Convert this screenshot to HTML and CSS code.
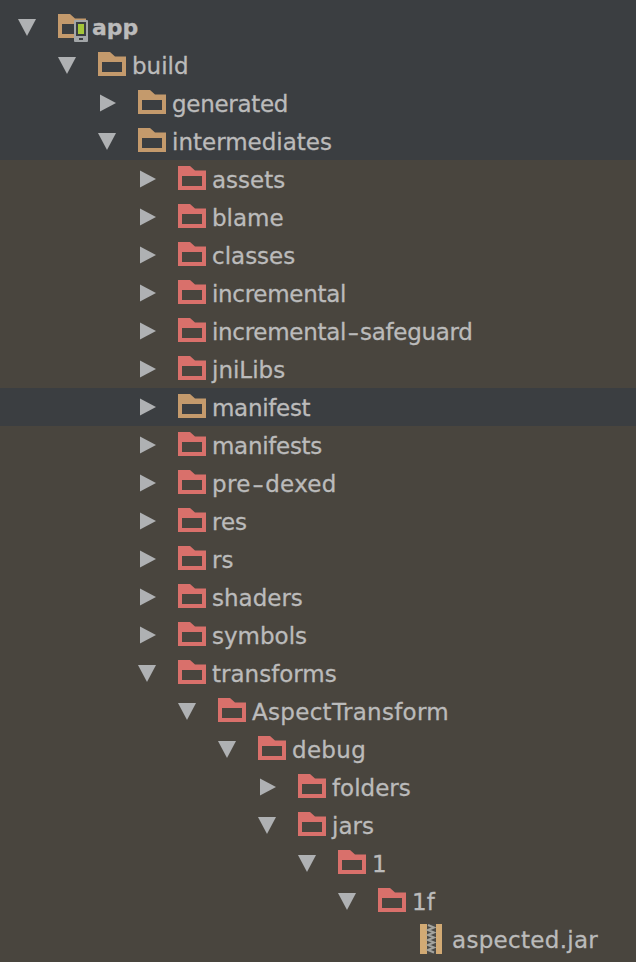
FILE: index.html
```html
<!DOCTYPE html>
<html lang="en">
<head>
  <meta charset="UTF-8">
  <title>Project tree</title>
  <link rel="stylesheet" href="styles.css">
</head>
<body>

  <!-- Shared icons -->
  <svg class="icon-defs" width="0" height="0">
    <symbol id="folder" viewBox="0 0 28 24">
      <path fill-rule="evenodd" d="M0 0H12L17 4.5H28V24H0ZM4 10V20H24V10Z"/>
    </symbol>
    <symbol id="arrow-down" viewBox="0 0 18 17">
      <path d="M0 0H18L9 17Z"/>
    </symbol>
    <symbol id="arrow-right" viewBox="0 0 17 18">
      <path d="M0 0L17 9L0 18Z"/>
    </symbol>
  </svg>

  <ul class="tree">
    <li class="row d0 vcs">
      <svg class="arrow"><use href="#arrow-down"/></svg>
      <span class="icon-app">
        <svg class="folder"><use href="#folder"/></svg>
        <svg class="device" viewBox="0 0 14 22">
          <rect width="14" height="22" rx="1" fill="#a3a6a8"/>
          <rect x="2" y="2" width="10" height="14" fill="#3b3e41"/>
          <rect x="4" y="4" width="6" height="10" fill="#a4c639"/>
          <rect x="5" y="18" width="4" height="2" fill="#3b3e41"/>
        </svg>
      </span>
      <span class="label bold">app</span>
    </li>
    <li class="row d1 vcs">
      <svg class="arrow"><use href="#arrow-down"/></svg>
      <svg class="folder"><use href="#folder"/></svg>
      <span class="label">build</span>
    </li>
    <li class="row d2 vcs">
      <svg class="arrow right"><use href="#arrow-right"/></svg>
      <svg class="folder"><use href="#folder"/></svg>
      <span class="label tight">generated</span>
    </li>
    <li class="row d2 vcs">
      <svg class="arrow"><use href="#arrow-down"/></svg>
      <svg class="folder"><use href="#folder"/></svg>
      <span class="label">intermediates</span>
    </li>
    <li class="row d3 ignored">
      <svg class="arrow right"><use href="#arrow-right"/></svg>
      <svg class="folder"><use href="#folder"/></svg>
      <span class="label">assets</span>
    </li>
    <li class="row d3 ignored">
      <svg class="arrow right"><use href="#arrow-right"/></svg>
      <svg class="folder"><use href="#folder"/></svg>
      <span class="label">blame</span>
    </li>
    <li class="row d3 ignored">
      <svg class="arrow right"><use href="#arrow-right"/></svg>
      <svg class="folder"><use href="#folder"/></svg>
      <span class="label">classes</span>
    </li>
    <li class="row d3 ignored">
      <svg class="arrow right"><use href="#arrow-right"/></svg>
      <svg class="folder"><use href="#folder"/></svg>
      <span class="label tight">incremental</span>
    </li>
    <li class="row d3 ignored">
      <svg class="arrow right"><use href="#arrow-right"/></svg>
      <svg class="folder"><use href="#folder"/></svg>
      <span class="label tight">incremental<span class="dash">-</span>safeguard</span>
    </li>
    <li class="row d3 ignored">
      <svg class="arrow right"><use href="#arrow-right"/></svg>
      <svg class="folder"><use href="#folder"/></svg>
      <span class="label">jniLibs</span>
    </li>
    <li class="row d3 vcs">
      <svg class="arrow right"><use href="#arrow-right"/></svg>
      <svg class="folder"><use href="#folder"/></svg>
      <span class="label tight">manifest</span>
    </li>
    <li class="row d3 ignored">
      <svg class="arrow right"><use href="#arrow-right"/></svg>
      <svg class="folder"><use href="#folder"/></svg>
      <span class="label tight">manifests</span>
    </li>
    <li class="row d3 ignored">
      <svg class="arrow right"><use href="#arrow-right"/></svg>
      <svg class="folder"><use href="#folder"/></svg>
      <span class="label wide">pre<span class="dash">-</span>dexed</span>
    </li>
    <li class="row d3 ignored">
      <svg class="arrow right"><use href="#arrow-right"/></svg>
      <svg class="folder"><use href="#folder"/></svg>
      <span class="label">res</span>
    </li>
    <li class="row d3 ignored">
      <svg class="arrow right"><use href="#arrow-right"/></svg>
      <svg class="folder"><use href="#folder"/></svg>
      <span class="label">rs</span>
    </li>
    <li class="row d3 ignored">
      <svg class="arrow right"><use href="#arrow-right"/></svg>
      <svg class="folder"><use href="#folder"/></svg>
      <span class="label">shaders</span>
    </li>
    <li class="row d3 ignored">
      <svg class="arrow right"><use href="#arrow-right"/></svg>
      <svg class="folder"><use href="#folder"/></svg>
      <span class="label">symbols</span>
    </li>
    <li class="row d3 ignored">
      <svg class="arrow"><use href="#arrow-down"/></svg>
      <svg class="folder"><use href="#folder"/></svg>
      <span class="label">transforms</span>
    </li>
    <li class="row d4 ignored">
      <svg class="arrow"><use href="#arrow-down"/></svg>
      <svg class="folder"><use href="#folder"/></svg>
      <span class="label wide">AspectTransform</span>
    </li>
    <li class="row d5 ignored">
      <svg class="arrow"><use href="#arrow-down"/></svg>
      <svg class="folder"><use href="#folder"/></svg>
      <span class="label wide">debug</span>
    </li>
    <li class="row d6 ignored">
      <svg class="arrow right"><use href="#arrow-right"/></svg>
      <svg class="folder"><use href="#folder"/></svg>
      <span class="label">folders</span>
    </li>
    <li class="row d6 ignored">
      <svg class="arrow"><use href="#arrow-down"/></svg>
      <svg class="folder"><use href="#folder"/></svg>
      <span class="label">jars</span>
    </li>
    <li class="row d7 ignored">
      <svg class="arrow"><use href="#arrow-down"/></svg>
      <svg class="folder"><use href="#folder"/></svg>
      <span class="label">1</span>
    </li>
    <li class="row d8 ignored">
      <svg class="arrow"><use href="#arrow-down"/></svg>
      <svg class="folder"><use href="#folder"/></svg>
      <span class="label">1f</span>
    </li>
    <li class="row d9 ignored">
      <span class="arrow"></span>
      <svg class="jar" viewBox="0 0 28 30">
        <rect x="2" width="7" height="30" fill="#d2aa74"/>
        <rect x="9" width="9" height="30" fill="#4b4a47"/>
        <path d="M10 1l6 2.5l-6 2.5l6 2.5l-6 2.5l6 2.5l-6 2.5l6 2.5l-6 2.5l6 2.5l-6 2.5l6 2.5" fill="none" stroke="#a3a39e" stroke-width="2"/>
        <rect x="18" width="6" height="30" fill="#d2aa74"/>
      </svg>
      <span class="label wide">aspected.jar</span>
    </li>
  </ul>

</body>
</html>
```

FILE: styles.css
```css
html {
  background: #49453e;
}

body {
  margin: 0;
  padding: 0;
  height: 962px;
  overflow: hidden;
  font-family: "DejaVu Sans", sans-serif;
  color: #bbbbbb;
}

.icon-defs {
  display: block;
  height: 0;
}

/* Tree */
.tree {
  list-style: none;
  margin: 0;
  padding: 0;
}

.row {
  display: flex;
  align-items: center;
  height: 38px;
}

.row:first-child {
  height: 46px;
  padding-top: 8px;
  box-sizing: border-box;
}

.vcs {
  background: #3b3e41;
}

.ignored {
  background: #49453e;
}

/* One indent level is 40px */
.d0 { padding-left: 18px; }
.d1 { padding-left: 58px; }
.d2 { padding-left: 98px; }
.d3 { padding-left: 138px; }
.d4 { padding-left: 178px; }
.d5 { padding-left: 218px; }
.d6 { padding-left: 258px; }
.d7 { padding-left: 298px; }
.d8 { padding-left: 338px; }
.d9 { padding-left: 378px; }

.arrow {
  flex: none;
  width: 18px;
  height: 17px;
  margin-right: 22px;
  fill: #afb1b3;
}

.arrow.right {
  width: 16px;
  height: 18px;
  margin-left: 2px;
}

.folder {
  flex: none;
  width: 28px;
  height: 24px;
  margin-bottom: 2px;
  fill: #c49a6c;
}

.ignored .folder {
  fill: #d9706b;
}

.jar {
  flex: none;
  width: 28px;
  height: 30px;
}

.label {
  margin-left: 6px;
  padding-top: 2px;
  font-size: 23px;
  line-height: 36px;
  white-space: nowrap;
  -webkit-text-stroke: 0.3px #bbbbbb;
}

.bold {
  font-size: 22px;
  font-weight: bold;
}

.tight {
  letter-spacing: -0.3px;
}

.wide {
  letter-spacing: 0.3px;
}

/* The hyphen is long in the IDE font */
.dash {
  display: inline-block;
  margin: 0 3px;
  transform: scaleX(1.4);
}

/* Module icon: folder with a device over its corner */
.icon-app {
  position: relative;
  display: flex;
  flex: none;
  width: 28px;
  height: 24px;
  margin-bottom: 2px;
}

.device {
  position: absolute;
  left: 16px;
  top: 6px;
  width: 14px;
  height: 22px;
}
```
